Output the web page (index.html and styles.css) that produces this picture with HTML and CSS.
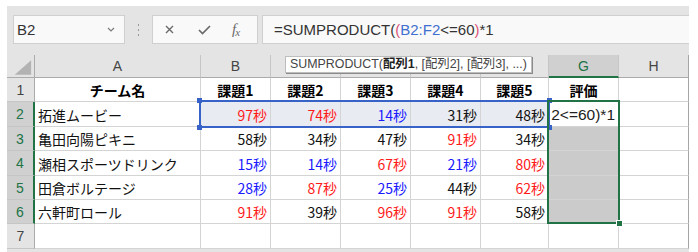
FILE: index.html
```html
<!DOCTYPE html>
<html lang="ja">
<head>
<meta charset="utf-8">
<title>Excel SUMPRODUCT</title>
<link rel="stylesheet" href="styles.css">
</head>
<body>
<div class="app">
  <div class="fbar">
    <div class="namebox">
      <span class="nb-text">B2</span>
      <svg class="chev" width="8" height="5" viewBox="0 0 8 5"><path d="M1 1 L4 4 L7 1" fill="none" stroke="#7a7a7a" stroke-width="1.2"/></svg>
    </div>
    <div class="vsep"><i></i><i></i><i></i></div>
    <div class="fbtns">
      <svg class="ic-x" width="9" height="9" viewBox="0 0 9 9"><path d="M1 1 L8 8 M8 1 L1 8" stroke="#6a6a6a" stroke-width="1.4" fill="none"/></svg>
      <svg class="ic-ok" width="13" height="10" viewBox="0 0 13 10"><path d="M1 5 L4.5 8.5 L12 1" stroke="#6a6a6a" stroke-width="1.7" fill="none"/></svg>
      <span class="fx">f<span class="fx-x">x</span></span>
    </div>
    <div class="finput"><span>=SUMPRODUCT(</span><span class="pk">(</span><span class="bl">B2:F2</span><span>&lt;=60</span><span class="pk">)</span><span>*1</span></div>
  </div>

  <div class="sheet">
    <div class="corner"><svg width="28" height="23" viewBox="0 0 28 23"><polygon points="25,5 25,20 8,20" fill="#b3b3b3"/></svg></div>
    <div class="ch">A</div>
    <div class="ch">B</div>
    <div class="ch"></div>
    <div class="ch"></div>
    <div class="ch"></div>
    <div class="ch"></div>
    <div class="ch sel">G</div>
    <div class="ch last">H</div>

    <div class="rh">1</div>
    <div class="c hd">チーム名</div>
    <div class="c hd">課題1</div>
    <div class="c hd">課題2</div>
    <div class="c hd">課題3</div>
    <div class="c hd">課題4</div>
    <div class="c hd">課題5</div>
    <div class="c hd">評価</div>
    <div class="c last"></div>

    <div class="rh sel">2</div>
    <div class="c name">拓進ムービー</div>
    <div class="c num ref red">97秒</div>
    <div class="c num ref red">74秒</div>
    <div class="c num ref blue">14秒</div>
    <div class="c num ref">31秒</div>
    <div class="c num ref">48秒</div>
    <div class="c edit">2&lt;=60)*1</div>
    <div class="c last"></div>

    <div class="rh sel">3</div>
    <div class="c name">亀田向陽ピキニ</div>
    <div class="c num">58秒</div>
    <div class="c num">34秒</div>
    <div class="c num">47秒</div>
    <div class="c num red">91秒</div>
    <div class="c num">34秒</div>
    <div class="c shade"></div>
    <div class="c last"></div>

    <div class="rh sel">4</div>
    <div class="c name">瀬相スポーツドリンク</div>
    <div class="c num blue">15秒</div>
    <div class="c num blue">14秒</div>
    <div class="c num red">67秒</div>
    <div class="c num blue">21秒</div>
    <div class="c num red">80秒</div>
    <div class="c shade"></div>
    <div class="c last"></div>

    <div class="rh sel">5</div>
    <div class="c name">田倉ボルテージ</div>
    <div class="c num blue">28秒</div>
    <div class="c num red">87秒</div>
    <div class="c num blue">25秒</div>
    <div class="c num">44秒</div>
    <div class="c num red">62秒</div>
    <div class="c shade"></div>
    <div class="c last"></div>

    <div class="rh sel">6</div>
    <div class="c name">六軒町ロール</div>
    <div class="c num red">91秒</div>
    <div class="c num">39秒</div>
    <div class="c num red">96秒</div>
    <div class="c num red">91秒</div>
    <div class="c num">58秒</div>
    <div class="c shade"></div>
    <div class="c last"></div>

    <div class="rh">7</div>
    <div class="c"></div>
    <div class="c"></div>
    <div class="c"></div>
    <div class="c"></div>
    <div class="c"></div>
    <div class="c"></div>
    <div class="c"></div>
    <div class="c last"></div>

    <div class="tip">SUMPRODUCT(<b>配列1</b>, [配列2], [配列3], ...)</div>
    <div class="rng-blue"><i class="hd1 tl"></i><i class="hd1 tr"></i><i class="hd1 bl"></i><i class="hd1 br"></i></div>
    <div class="rng-green"><i class="fillh"></i></div>
  </div>
</div>
</body>
</html>
```

FILE: styles.css
```css
html, body {
  margin: 0;
  padding: 0;
  background: #ffffff;
}

.app {
  margin: 6px 0 0 7px;
  width: 682px;
  height: 246px;
  overflow: hidden;
  background: #e4e4e4;
}

/* formula bar */
.fbar {
  height: 49px;
  box-sizing: border-box;
  padding-top: 9px;
  display: flex;
  align-items: flex-start;
}

.namebox {
  margin-left: 6px;
  width: 112px;
  height: 29px;
  box-sizing: border-box;
  border: 1px solid #cfcfcf;
  background: #f9f9f9;
  display: flex;
  align-items: center;
  justify-content: space-between;
  padding: 0 9px 0 3px;
  font: 15px "Liberation Sans", Arial, sans-serif;
  color: #333333;
}

.vsep {
  width: 27px;
  height: 29px;
  display: flex;
  flex-direction: column;
  align-items: center;
  justify-content: center;
  gap: 3px;
}
.vsep i {
  display: block;
  width: 1px;
  height: 2px;
  background: #9a9a9a;
}

.fbtns {
  width: 106px;
  height: 29px;
  box-sizing: border-box;
  border: 1px solid #cfcfcf;
  background: #f9f9f9;
  display: flex;
  align-items: center;
  padding-left: 12px;
}
.ic-x { margin-right: 24px; }
.ic-ok { margin-right: 21px; }
.fx {
  font: italic 15px "Liberation Serif", serif;
  color: #6a6a6a;
  letter-spacing: -1px;
}
.fx-x {
  font-size: 11px;
  position: relative;
  top: 2px;
}

.finput {
  margin-left: 4px;
  flex: 1;
  height: 29px;
  box-sizing: border-box;
  border: 1px solid #cfcfcf;
  border-right: none;
  background: #f9f9f9;
  display: flex;
  align-items: center;
  padding-left: 11px;
  font: 15px "Liberation Sans", Arial, sans-serif;
  color: #333333;
  white-space: pre;
}
.pk { color: #d9557a; }
.bl { color: #3f6fd0; }

/* sheet grid */
.sheet {
  position: relative;
  display: grid;
  grid-template-columns: 28px 166px 70px 70px 70px 70px 68px 70px 70px;
  grid-template-rows: 23px 24px 25px 24px 25px 24px 24px 25px;
  background: #ffffff;
}

.corner, .ch, .rh {
  background: #e4e4e4;
  box-sizing: border-box;
  display: flex;
  align-items: center;
  justify-content: center;
  font: 14px "Liberation Sans", Arial, sans-serif;
  color: #444444;
}
.corner {
  border-right: 1px solid #ababab;
  border-bottom: 1px solid #ababab;
  align-items: stretch;
  justify-content: stretch;
}
.corner svg { display: block; }

.ch {
  border-right: 1px solid #c6c6c6;
  border-bottom: 1px solid #ababab;
}
.ch.sel {
  background: #d0d0d0;
  color: #217346;
  border-bottom: 2px solid #217346;
}
.ch.last { border-right: 1px solid #a6a6a6; }

.rh {
  border-right: 1px solid #ababab;
  border-bottom: 1px solid #c6c6c6;
}
.rh.sel {
  background: #d0d0d0;
  color: #217346;
  border-right: 2px solid #217346;
}

.c {
  box-sizing: border-box;
  border-right: 1px solid #d4d4d4;
  border-bottom: 1px solid #d4d4d4;
  display: flex;
  align-items: center;
  white-space: nowrap;
  overflow: hidden;
  font: 14px "Noto Sans CJK JP", sans-serif;
  color: #111111;
  padding-top: 1px;
}
.c.last { border-right: 1px solid #a6a6a6; }
.c.hd {
  justify-content: center;
  font-weight: 700;
  color: #000000;
}
.c.name { padding-left: 3px; }
.c.num {
  justify-content: flex-end;
  padding-right: 3px;
}
.c.ref { background: #e9ebf2; }
.c.red { color: #ff1a1a; }
.c.blue { color: #1a1aff; }
.c.shade { background: #cbcbcb; }
.c.edit {
  justify-content: flex-end;
  padding-right: 3px;
  font: 15.5px "Liberation Sans", Arial, sans-serif;
  color: #222222;
}

/* overlays */
.tip {
  position: absolute;
  left: 278px;
  top: 1px;
  width: 247px;
  height: 17px;
  box-sizing: border-box;
  background: #ffffff;
  border: 1px solid #bdbdbd;
  box-shadow: 1px 1px 0 #8a8a8a;
  padding-left: 4px;
  font: 12.4px "Liberation Sans", "Noto Sans CJK JP", sans-serif;
  line-height: 15px;
  color: #444444;
  white-space: nowrap;
  overflow: hidden;
}
.tip b { color: #222222; }

.rng-blue {
  position: absolute;
  left: 192px;
  top: 45px;
  width: 351px;
  height: 28px;
  box-sizing: border-box;
  border: 2px solid #3763c8;
}
.hd1 {
  position: absolute;
  width: 5px;
  height: 5px;
  background: #3763c8;
}
.hd1.tl { left: -4px; top: -4px; }
.hd1.tr { right: -4px; top: -4px; }
.hd1.bl { left: -4px; bottom: -4px; }
.hd1.br { right: -4px; bottom: -4px; }

.rng-green {
  position: absolute;
  left: 540px;
  top: 45px;
  width: 73px;
  height: 124px;
  box-sizing: border-box;
  border: 2px solid #217346;
}
.fillh {
  position: absolute;
  right: -5px;
  bottom: -5px;
  width: 5px;
  height: 5px;
  background: #217346;
  border: 1px solid #ffffff;
}
```
